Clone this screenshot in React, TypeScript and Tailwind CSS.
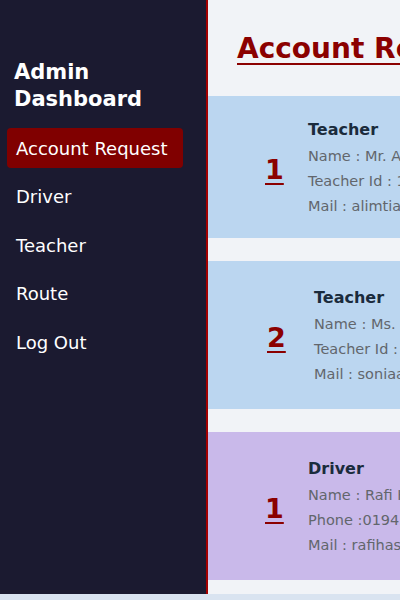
import React from "react";

const navItems = ["Driver", "Teacher", "Route", "Log Out"];

const requests = [
  {
    no: 1,
    kind: "Teacher",
    bg: "bg-[#bbd6f0]",
    h: "h-[142px]",
    pl: "pl-[57px]",
    numW: "w-[43px]",
    lines: ["Name : Mr. Alim Imtiaz", "Teacher Id : 1021", "Mail : alimtiaz@gmail.com"],
  },
  {
    no: 2,
    kind: "Teacher",
    bg: "bg-[#bbd6f0]",
    h: "h-[148px]",
    pl: "pl-[59px]",
    numW: "w-[47px]",
    lines: ["Name : Ms. Sonia Akter", "Teacher Id : 1034", "Mail : soniaakter@gmail.com"],
  },
  {
    no: 1,
    kind: "Driver",
    bg: "bg-[#c9b9ea]",
    h: "h-[148px]",
    pl: "pl-[57px]",
    numW: "w-[43px]",
    lines: ["Name : Rafi Hasan", "Phone :01945678321", "Mail : rafihasan@gmail.com"],
  },
];

export default function App() {
  return (
    <div className="w-[400px] h-[600px] overflow-hidden bg-[#d9e3f0] font-['DejaVu_Sans',sans-serif]">
      <div className="flex h-[594px]">
        {/* sidebar */}
        <aside className="w-[208px] shrink-0 bg-[#1b1a30] border-r-2 border-[#a30000] pt-[59px]">
          <h1 className="pl-[14px] text-white font-bold text-[21px] leading-[27px]">
            Admin
            <br />
            Dashboard
          </h1>
          <nav className="mt-[15px] flex flex-col gap-[8.5px]">
            <div className="ml-[7px] w-[176px] h-[40px] rounded-[4px] bg-[#800000] flex items-center pl-[9px] text-[18px] text-white">
              Account Request
            </div>
            {navItems.map((item) => (
              <div key={item} className="h-[40px] flex items-center pl-[16px] text-[18px] text-white">
                {item}
              </div>
            ))}
          </nav>
        </aside>

        {/* main */}
        <main className="flex-1 min-w-0 overflow-hidden bg-[#f1f3f7]">
          <h2 className="pl-[29px] pt-[31px] h-[96px] text-[28px] font-bold text-[#8b0000] underline underline-offset-[5px] decoration-2 whitespace-nowrap leading-[36px]">
            Account Requests
          </h2>
          <div className="flex flex-col gap-[23px]">
            {requests.map((r, i) => (
              <div key={i} className={`${r.bg} ${r.h} ${r.pl} w-[400px] flex items-center`}>
                <div className={`${r.numW} shrink-0 mt-[6px] text-[27px] font-bold text-[#8b0000] underline underline-offset-[4px] decoration-2`}>
                  {r.no}
                </div>
                <div className="whitespace-nowrap mt-[4px]">
                  <div className="text-[16px] font-bold text-[#1a2b3c] leading-[22px] mb-[3px]">{r.kind}</div>
                  {r.lines.map((l) => (
                    <div key={l} className="text-[14.5px] text-[#62666c] leading-[25px]">
                      {l}
                    </div>
                  ))}
                </div>
              </div>
            ))}
          </div>
        </main>
      </div>
    </div>
  );
}
